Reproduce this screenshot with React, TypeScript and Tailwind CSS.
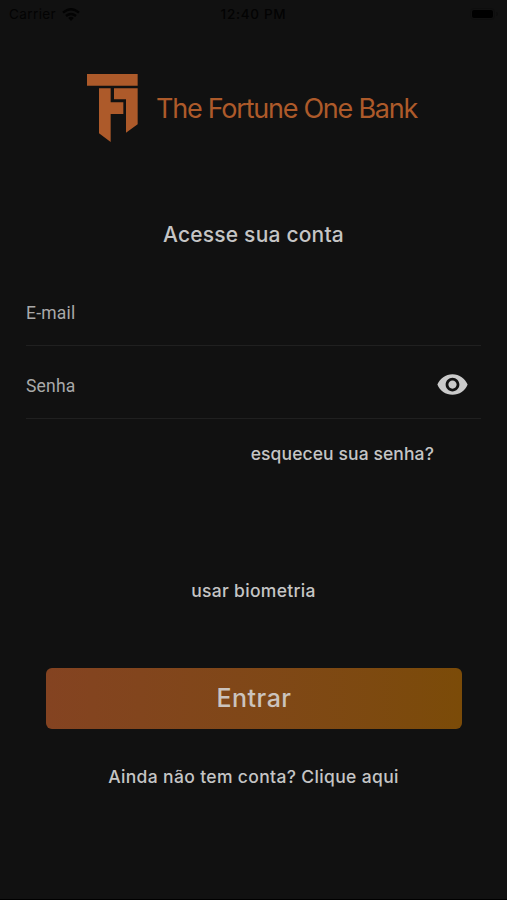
import { MdVisibility } from "react-icons/md";

function Logo() {
   return <svg className="w-[52px] h-[69px]" viewBox="21 27 156 207" fill="#ad5a2a">
      <path d="M21 27H173V62H21Z" />
      <path d="M57 70H92V112H130V147H92V231L57 205Z" />
      <path d="M102 70H173V178L138 203V103H102Z" />
   </svg>
}

function StatusBar() {
   return <div className="grid grid-cols-3 items-center h-[28px] px-[9px] text-[#030303] text-[13.5px]">
      <div className="flex items-center gap-[6px]">
         <span className="tracking-[0.4px]">Carrier</span>
         <svg className="w-[18px] h-[13px]" viewBox="0 0 18 13" fill="none" stroke="#030303" strokeWidth="2.4">
            <path d="M1 4.7Q9-2.2 17 4.7" />
            <path d="M4 8Q9 3.8 14 8" />
            <path d="M6.2 10Q9 7.6 11.8 10L9 13Z" fill="#030303" stroke="none" />
         </svg>
      </div>
      <span className="text-center font-medium tracking-[0.7px] whitespace-nowrap">12:40 PM</span>
      <div className="flex items-center justify-end gap-px">
         <div className="w-[25px] h-[12px] rounded-[4px] border border-[#0e0e0e] p-px">
            <div className="h-full rounded-[2px] bg-black"></div>
         </div>
         <div className="w-[2px] h-[4px] rounded-r bg-[#0e0e0e]"></div>
      </div>
   </div>
}

export default function App() {
   return <main className="flex flex-col w-[507px] h-[900px] bg-[#111111] border-b border-black text-[#c5c5c5] font-['Inter',sans-serif] overflow-hidden">
      <StatusBar />
      <header className="flex mt-[46px] ml-[87px] h-[69px] text-[#ad5a2a]">
         <Logo />
         <h1 className="ml-[17px] mt-[16px] text-[27px] leading-[38px] tracking-[-1.25px] whitespace-nowrap">The Fortune One Bank</h1>
      </header>
      <h2 className="mt-[77px] h-[30px] text-center text-[21px] leading-[30px] font-medium tracking-[0.2px]">Acesse sua conta</h2>
      <form className="mx-[26px] mt-[21px] font-['Roboto',sans-serif]">
         <div className="flex items-center h-[75px] pt-[10px] border-b border-[#202020]">
            <label className="text-[17.5px] tracking-[0.2px] text-[#a9a9a9]">E-mail</label>
         </div>
         <div className="flex items-center justify-between h-[73px] pr-[12px] pt-[4px] border-b border-[#202020]">
            <label className="mt-[5px] text-[17.5px] tracking-[0.2px] text-[#a9a9a9]">Senha</label>
            <MdVisibility size={33} color="#cacaca" />
         </div>
      </form>
      <a className="mt-[23px] mr-[73px] h-[24px] text-right text-[17.5px] leading-[24px] font-medium tracking-[0.1px]">esqueceu sua senha?</a>
      <a className="mt-[113px] h-[24px] text-center text-[17.5px] leading-[24px] font-medium tracking-[0.3px]">usar biometria</a>
      <button className="mt-[65px] ml-[46px] w-[416px] h-[61px] rounded-[6px] bg-linear-to-r from-[#844321] to-[#7b4b08] text-[25px] font-medium tracking-[0.5px] text-[#cbc3bd]">Entrar</button>
      <a className="mt-[36px] h-[24px] text-center text-[17.5px] leading-[24px] font-medium tracking-[0.35px]">Ainda não tem conta? Clique aqui</a>
   </main>
}
